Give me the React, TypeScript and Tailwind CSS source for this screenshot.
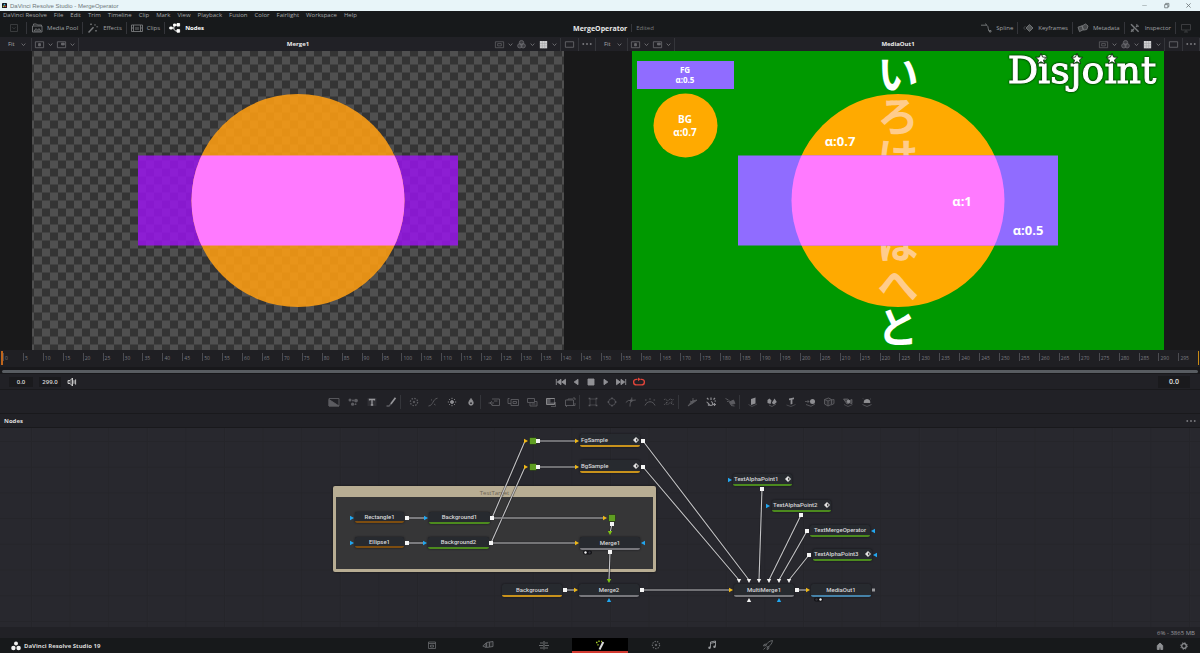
import type { ReactNode } from 'react';
import clsx from 'clsx';

const menus = [
  'DaVinci Resolve', 'File', 'Edit', 'Trim', 'Timeline', 'Clip', 'Mark', 'View',
  'Playback', 'Fusion', 'Color', 'Fairlight', 'Workspace', 'Help',
];

function Glyph({ children, className = 'size-3' }: { children: ReactNode; className?: string }) {
  return (
    <svg viewBox="0 0 12 12" className={clsx('shrink-0', className)} fill="none" stroke="currentColor" strokeWidth="0.9" aria-hidden="true">
      {children}
    </svg>
  );
}

function Chevron() {
  return (
    <Glyph className="size-[11px] text-[#77777b]">
      <path d="M4 5l2 2.2L8 5" />
    </Glyph>
  );
}

function Rule({ className = 'h-3' }: { className?: string }) {
  return <span className={clsx('w-px shrink-0 bg-[#34353a]', className)} />;
}

function IconButton({ label, className, children }: { label: string; className?: string; children: ReactNode }) {
  return (
    <button type="button" aria-label={label} className={clsx('flex shrink-0 items-center justify-center', className)}>
      {children}
    </button>
  );
}

function PanelButton({ label, active, children }: { label: string; active?: boolean; children: ReactNode }) {
  return (
    <button
      type="button"
      className={clsx('flex items-center gap-1 px-1 text-[6px]', active ? 'font-bold text-white' : 'text-[#a0a2a5]')}
    >
      <Glyph className={clsx('size-3', !active && 'text-[#77797c]')}>{children}</Glyph>
      {label}
    </button>
  );
}

function TitleBar() {
  return (
    <div className="flex h-[11px] items-center justify-between bg-[#e8f5f9] text-[6px] text-[#6f777a]">
      <div className="flex items-center gap-[3px] pl-[2px]">
        <svg viewBox="0 0 6 6" className="size-[5px]" aria-hidden="true">
          <rect width="6" height="6" rx="1" fill="#10131c" />
          <circle cx="3" cy="2" r="1.1" fill="#49b4d8" />
          <circle cx="2" cy="4" r="1.1" fill="#b9c23e" />
          <circle cx="4.1" cy="4" r="1.1" fill="#d8443c" />
        </svg>
        <span className="font-['Liberation_Sans',sans-serif]">DaVinci Resolve Studio - MergeOperator</span>
      </div>
      <div className="flex gap-[11px] pr-[6px]">
        <IconButton label="Minimize">
          <Glyph className="size-[11px]"><path d="M3.5 6h5" strokeOpacity=".5" /></Glyph>
        </IconButton>
        <IconButton label="Restore">
          <Glyph className="size-[11px]"><path d="M4 5h3.5v3.5H4zM5 5V3.7h3.6v3.6H7.5" /></Glyph>
        </IconButton>
        <IconButton label="Close">
          <Glyph className="size-[11px]"><path d="M3.7 3.7l4.6 4.6M8.3 3.7L3.7 8.3" /></Glyph>
        </IconButton>
      </div>
    </div>
  );
}

function Toolbar() {
  return (
    <div className="grid h-[18px] grid-cols-3 items-center">
      <div className="flex items-center">
        <IconButton label="Panel layout" className="w-[26px] pl-[2px] text-[#3d3f42]">
          <Glyph><path d="M2.5 2.5h7v7h-7zM4.5 5.3L6 6.8l1.5-1.5" /></Glyph>
        </IconButton>
        <Rule />
        <PanelButton label="Media Pool">
          <path d="M2.5 3.5V2h3l1 1h4v1M1.5 4h9.5v6H1.5zM3 9l2-2.4 1.6 1.6L8 6.6 9.8 9z" />
        </PanelButton>
        <Rule />
        <PanelButton label="Effects">
          <path d="M1.5 10.5l5-5.2" strokeWidth="1.5" />
          <path d="M4 1.5v1.6M3.2 2.3h1.6M8 2v1.8M9.3 4.8h1.8M9 8v1.5M8.2 8.8h1.6" />
        </PanelButton>
        <Rule />
        <PanelButton label="Clips">
          <path d="M.5 3h11v6.5H.5zM2.5 3v6.5M9.5 3v6.5M2.5 6H.5M11.5 6h-2M5 5v3M7 5v3" />
        </PanelButton>
        <Rule />
        <PanelButton label="Nodes" active>
          <path d="M.8 5h2.4v2H.8zM4.6 2h2v2h-2zM8 1.5h2.6v2.6H8zM8 7.6h2.6v2.6H8z" fill="currentColor" />
          <path d="M3.2 6h1.6c0-2 1-3 3.2-3M4.8 6c0 2 1.200 3 3.200 3" />
        </PanelButton>
      </div>
      <div className="flex items-center justify-center gap-1 pl-[27px] text-[6px] text-[#77797c]">
        <span className="text-[7px] font-bold text-[#e8e8e8]">MergeOperator</span>
        <Rule className="h-2" />
        <span>Edited</span>
      </div>
      <div className="flex items-center justify-end pr-2">
        <PanelButton label="Spline">
          <path d="M1 3.2h6M5.5 1.5C6 3 7 3 7.8 4.4s.2 3.4 1 4.6h1.5M9.5 8.5h1.5v1.5H9.5z" />
        </PanelButton>
        <Rule />
        <PanelButton label="Keyframes">
          <path d="M7.5 2.6L11 6 7.5 9.4 4 6z" fill="currentColor" fillOpacity=".6" />
          <path d="M3.5 4L1.6 6l1.9 2" strokeOpacity=".5" />
        </PanelButton>
        <Rule />
        <PanelButton label="Metadata">
          <path d="M1 5.2l4-1.4 1.5 3.8-4 2zM5 4l3.6-2 2.4 2-1.2 3.5-3.4.6z" fill="currentColor" fillOpacity=".5" />
        </PanelButton>
        <Rule />
        <PanelButton label="Inspector">
          <path d="M2 2.2l7.6 7.6" strokeWidth="1.5" />
          <path d="M2 9.8l3-3M7 5l1.2-1.2M8 2.2c-.6 1.5.5 2.4 1.8 1.8M2.2 8c1-.4 2.2.5 1.8 1.8" strokeWidth="1.3" />
        </PanelButton>
        <Rule />
        <IconButton label="Full screen preview" className="ml-1 text-[#3f4144]">
          <Glyph><path d="M1.5 2.5h9V8h-9zM6 8v2M4 10h4" /></Glyph>
        </IconButton>
      </div>
    </div>
  );
}

function ViewerHeader({ title }: { title: string }) {
  return (
    <div className="grid h-[14px] grid-cols-[1fr_auto_1fr] items-center bg-[#212126] text-[6px] text-[#a8a8ab]">
      <div className="flex items-center">
        <button type="button" className="flex items-center gap-[3px] pl-2 pr-[2px]">
          Fit
          <Chevron />
        </button>
        <Rule className="h-[13px]" />
        <IconButton label="View A" className="ml-[2px] text-[#6a6a6e]">
          <Glyph className="size-[11px]">
            <path d="M1.5 3h9v6.500h-9z" />
            <path d="M5 5h2v2.500H5z" fill="currentColor" />
          </Glyph>
          <Chevron />
        </IconButton>
        <IconButton label="Sub view" className="text-[#6a6a6e]">
          <Glyph className="size-[11px]">
            <path d="M1.5 3h9v6.500h-9z" />
            <path d="M6 4.500h3v2H6z" fill="currentColor" />
          </Glyph>
          <Chevron />
        </IconButton>
        <Rule className="h-[13px]" />
      </div>
      <h2 className="font-bold text-[#ececec]">{title}</h2>
      <div className="flex items-center justify-end text-[#6a6a6e]">
        <IconButton label="Region of interest">
          <Glyph className="size-[11px]"><path d="M1.5 3h9v6.500h-9zM4 5h4v2.500H4z" strokeOpacity=".8" /></Glyph>
          <Chevron />
        </IconButton>
        <IconButton label="Color channels">
          <Glyph className="size-[11px]">
            <circle cx="6" cy="4" r="2.4" fill="currentColor" fillOpacity=".4" />
            <circle cx="4.2" cy="7.4" r="2.4" fill="currentColor" fillOpacity=".4" />
            <circle cx="7.8" cy="7.4" r="2.4" fill="currentColor" fillOpacity=".4" />
          </Glyph>
          <Chevron />
        </IconButton>
        <IconButton label="Checker underlay">
          <Glyph className="size-[11px]">
            <path d="M2 2.2h8v8H2z" fill="#cfcfd1" stroke="none" />
            <path d="M4.7 2.2v8M7.300 2.2v8M2 4.900h8M2 7.500h8" stroke="#9a9a9c" strokeWidth="0.5" />
          </Glyph>
          <Chevron />
        </IconButton>
        <Rule className="h-[13px]" />
        <IconButton label="Single viewer" className="px-[3px]">
          <Glyph className="size-[11px]"><path d="M1.5 3h9v6h-9z" /></Glyph>
        </IconButton>
        <Rule className="h-[13px]" />
        <IconButton label="Viewer options" className="px-[2px] text-[#8b8b8f]">
          <Dots />
        </IconButton>
        <Rule className="h-[13px]" />
      </div>
    </div>
  );
}

function Dots() {
  return (
    <Glyph>
      <path d="M1.5 6h1.6M5.2 6h1.6M8.9 6h1.6" strokeWidth="1.5" />
    </Glyph>
  );
}

function MergeView() {
  return (
    <svg viewBox="0 0 532 299" className="block h-auto w-full" role="img" aria-label="Merge1">
      <defs>
        <pattern id="checker" width="16" height="16" x="266" y="149.5" patternUnits="userSpaceOnUse">
          <rect width="16" height="16" fill="#343434" />
          <path d="M0 0h8v8H0zM8 8h8v8H8z" fill="#505050" />
        </pattern>
        <clipPath id="disc">
          <circle cx="266" cy="149.5" r="106.5" />
        </clipPath>
      </defs>
      <rect width="532" height="299" fill="url(#checker)" />
      <rect x="106" y="104.5" width="320" height="90" fill="#9a14ee" fillOpacity=".83" />
      <circle cx="266" cy="149.5" r="106.5" fill="#ff9f12" fillOpacity=".87" />
      <rect x="106" y="104.5" width="320" height="90" fill="#ff7aff" clipPath="url(#disc)" />
    </svg>
  );
}

const star = 'M0-5.6L1.6-1.9 5.5-1.7 2.5.9 3.5 4.800 0 2.700-3.500 4.800-2.500.9-5.500-1.700-1.600-1.900z';

function MediaOutView() {
  return (
    <svg viewBox="0 0 532 299" className="block h-auto w-full" role="img" aria-label="MediaOut1">
      <rect width="532" height="299" fill="#009900" />
      <circle cx="266" cy="149.5" r="106.5" fill="#ffaa00" />
      <g className="font-['Noto_Sans_CJK_JP',sans-serif] text-[42px] font-bold [writing-mode:vertical-rl]" fill="#ffcc8c">
        <text x="266" y="2">
          <tspan fill="#fff">い</tspan>ろは
        </text>
        <text x="266" y="171">
          ほへ<tspan fill="#fff">と</tspan>
        </text>
      </g>
      <rect x="106" y="104.5" width="320" height="90" fill="#906cff" />
      <rect x="106" y="104.5" width="320" height="90" fill="#ff7aff" clipPath="url(#disc)" />
      <rect x="5" y="10" width="97" height="28" fill="#906cff" />
      <circle cx="53.5" cy="74.5" r="32" fill="#ffaa00" />
      <g fontFamily="'Open Sans', sans-serif" fontWeight="700" textAnchor="middle" fill="#fff">
        <text x="53" y="22" fontSize="8">FG</text>
        <text x="53" y="32" fontSize="8">α:0.5</text>
        <text x="53" y="72" fontSize="10">BG</text>
        <text x="53" y="85" fontSize="10">α:0.7</text>
        <text x="208" y="95" fontSize="13">α:0.7</text>
        <text x="330" y="155" fontSize="13">α:1</text>
        <text x="396" y="184" fontSize="13">α:0.5</text>
      </g>
      <text
        x="450"
        y="32"
        fontSize="38"
        textAnchor="middle"
        fill="#fff"
        stroke="#fff"
        className="font-['DejaVu_Serif',serif] drop-shadow-[0_0_1px_#000]"
      >
        Disjoint
      </text>
      <g fill="#fff" stroke="#0a1a0a" strokeWidth="0.8">
        <path d={star} transform="translate(409 8)" />
        <path d={star} transform="translate(445 8)" />
        <path d={star} transform="translate(480 8)" />
      </g>
    </svg>
  );
}

function Ruler() {
  const frames = Array.from({ length: 60 }, (_, i) => i * 5);
  return (
    <div className="flex h-[17px] bg-[#1f1f23] text-[5px] text-[#7b7b80]">
      <span className="mt-px ml-px h-[14px] w-[2px] shrink-0 bg-[#c0661c]" />
      {frames.map((frame) => (
        <span key={frame} className="mt-[3px] h-2 min-w-0 flex-1 border-l border-[#4b4b50] pl-px pt-[3px]">
          {frame}
        </span>
      ))}
      <span className="mt-px mr-px h-[14px] w-px shrink-0 bg-[#c98a14]" />
    </div>
  );
}

function Transport() {
  return (
    <div className="grid h-4 grid-cols-3 items-center border-b border-[#19191c] text-[6px]">
      <div className="flex items-center gap-[6px] pl-[9px]">
        <input aria-label="In point" defaultValue="0.0" className="h-[10px] w-6 bg-[#1a1a1d] text-center font-semibold text-[#d8d8d8]" />
        <input aria-label="Out point" defaultValue="299.0" className="h-[10px] w-[22px] bg-[#1a1a1d] text-center font-semibold text-[#d8d8d8]" />
        <IconButton label="Audio" className="-ml-px text-[#d5d5d5]">
          <Glyph>
            <path d="M2 4.5h2L6.5 2v8L4 7.5H2z" fill="currentColor" fillOpacity=".3" />
            <path d="M8 4.2v3.6M9.6 3.4v5.2" />
          </Glyph>
        </IconButton>
      </div>
      <div className="flex items-center justify-center text-[#919195]">
        <IconButton label="Go to start" className="w-[15px]">
          <Glyph><path d="M1.3 3v6M6 3.300v5.400L2.300 6zM10.500 3.300v5.400L6.800 6z" fill="currentColor" /></Glyph>
        </IconButton>
        <IconButton label="Play reverse" className="w-[15px]">
          <Glyph><path d="M8 3.300v5.400L4.200 6z" fill="currentColor" /></Glyph>
        </IconButton>
        <IconButton label="Stop" className="w-[15px]">
          <Glyph><path d="M3 3h6v6H3z" fill="currentColor" /></Glyph>
        </IconButton>
        <IconButton label="Play" className="w-[15px]">
          <Glyph><path d="M4 3.300v5.400L7.800 6z" fill="currentColor" /></Glyph>
        </IconButton>
        <IconButton label="Go to end" className="w-[15px]">
          <Glyph><path d="M10.7 3v6M6 3.300v5.400L9.700 6zM1.500 3.300v5.400L5.200 6z" fill="currentColor" /></Glyph>
        </IconButton>
        <IconButton label="Loop" className="ml-[3px] w-[15px] text-[#e0453a]">
          <Glyph>
            <path d="M4.500 3.300H3.400a2.600 2.600 0 000 5.600h5.200a2.600 2.600 0 000-5.600H7.500" strokeWidth="1.3" />
            <path d="M5 1.400l2.600 1.900L5 5.200z" fill="currentColor" stroke="none" />
          </Glyph>
        </IconButton>
      </div>
      <div className="flex justify-end pr-[10px]">
        <input aria-label="Current frame" defaultValue="0.0" className="h-3 w-8 bg-[#1a1a1d] text-center text-[7px] font-semibold text-[#e0e0e0]" />
      </div>
    </div>
  );
}

const toolGroups: { label: string; bright?: boolean; icon: ReactNode }[][] = [
  [
    { label: 'Background', icon: <><path d="M1 2.500h10V10H1z" /><path d="M1 3.500L11 10H1z" fill="currentColor" /></> },
    { label: 'Fast Noise', icon: <g fill="currentColor" stroke="none"><circle cx="3" cy="4" r="1.500" /><circle cx="6" cy="4.500" r="1" /><circle cx="9" cy="4.600" r="1.900" /><circle cx="5.600" cy="8.200" r="1.600" /><circle cx="8.600" cy="8.200" r=".9" /></g> },
    { label: 'Text', icon: <><path d="M1.500 2h9v8h-9z" fill="currentColor" fillOpacity=".25" stroke="none" /><path d="M3.500 4.600V3.500h5v1.100M6 3.500v5.500M4.800 9h2.400" strokeWidth="1.300" stroke="#96969a" /></> },
    { label: 'Paint', icon: <><path d="M10.500 1.800L5.800 8" strokeWidth="1.700" stroke="#96969a" /><path d="M5.800 8L4 10H1.500" strokeWidth="1.300" /></> },
  ],
  [
    { label: 'Color Corrector', icon: <><circle cx="6" cy="6" r="3.600" strokeWidth="1.300" strokeDasharray="1.500 1.300" /><circle cx="6" cy="6" r=".8" fill="currentColor" /></> },
    { label: 'Color Curves', icon: <path d="M1.500 10C6.500 9.500 5.500 3 10.500 2.200M4 3.500l1 .8M7 8l1.500 1" /> },
    { label: 'Brightness Contrast', bright: true, icon: <><circle cx="6" cy="6" r="1.500" fill="currentColor" /><path d="M6 1.800v1.200M6 9v1.200M1.800 6H3M9 6h1.200M3 3l.9.900M8.100 8.100l.9.900M9 3l-.9.900M3 9l.9-.9" /></> },
    { label: 'Blur', bright: true, icon: <><path d="M6 2.500c1.200 1.800 2.200 3 2.200 4.500a2.200 2.200 0 01-4.400 0C3.800 5.500 4.800 4.300 6 2.500z" fill="currentColor" /><circle cx="6" cy="7.200" r=".9" fill="#212126" stroke="none" /></> },
  ],
  [
    { label: 'Merge', icon: <path d="M4 3h7.500v6.500H4V8M.5 7H6M4 5.200L2 7l2 1.800M6 5h3.500" /> },
    { label: 'Channel Booleans', icon: <path d="M4 3.500h7.500v6H4zM1 2.500v5h3M2.500 2.500H1M6 5.500h3.500v2H6z" /> },
    { label: 'Matte Control', icon: <path d="M1.500 2.500h7v4h-7zM4 6.500V10h7V5.500H8.500M5.500 8h4" /> },
    { label: 'Resize', bright: true, icon: <><path d="M1.500 2.500h8v6h-8z" fill="currentColor" fillOpacity=".5" /><path d="M5.500 3h4v3.500h-4z" fill="#212126" stroke="none" /><path d="M6 10.500h4.500V6" strokeOpacity=".5" /></> },
    { label: 'Transform', icon: <path d="M1.500 4h8v5.500h-8zM9 2h2v2M1 9.500h1.500V11M4 4V3h5M8 9.500h3V7" /> },
  ],
  [
    { label: 'Rectangle', icon: <><path d="M3 3h6v6H3z" strokeWidth=".6" /><path d="M2.500 2.500h.01M9.500 2.500h.01M2.500 9.500h.01M9.500 9.500h.01" strokeWidth="1.700" strokeLinecap="square" /></> },
    { label: 'Ellipse', icon: <><circle cx="6" cy="6" r="3.400" strokeWidth=".7" /><path d="M5.300 2.300h1.400M5.300 9.700h1.400M2.300 5.300v1.400M9.700 5.300v1.400" strokeWidth="1.400" /></> },
    { label: 'Polygon', icon: <path d="M.8 6.500l2.500-2h3l4.500-.5M6.800 1.500C7.500 5 4.500 6 5 10.500M5.500 3.800h1.600v1.600H5.500z" /> },
    { label: 'B-Spline', icon: <path d="M1 9.500C3 4.500 9 4.500 11 9.500M1 4h1.600M5.200 3h1.600M9.500 4h1.600" /> },
    { label: 'Bitmap', icon: <path d="M1 4c2-3 3 3 5 0s3 2 5-1M1 9c2-3 3 1 5-1.500S9 10 11 8M3 6.500h2M8 6h2" strokeDasharray="1.400 .6" /> },
  ],
  [
    { label: 'Particle Emitter', icon: <><path d="M2 10l4-5 5-1-4 3z" fill="currentColor" /><path d="M4 5l2 1M7 2v3" /></> },
    { label: 'Particle Merge', bright: true, icon: <path d="M2 2l1.500 1.500M6 1.500V4M10 2L8.500 3.500M1.500 6c2 0 2 3.500 4.500 3.500S8 6 6 5.500M8 8.500h3M9.500 7v3M3 9.500l1-1M9.500 5H11" strokeWidth="1.200" /> },
    { label: 'Particle Render', icon: <><path d="M1.500 2.500l3 1.500M3 5.500L6 5M5.500 6l4-2L11 7.500l-4.500 1z" fill="currentColor" /><path d="M7 9.500l3.500.5" /></> },
  ],
  [
    { label: 'Image Plane', bright: true, icon: <><path d="M4 3l4.500-1.500v6L4 9z" fill="currentColor" stroke="none" /><path d="M1.500 8.500l3.500 2L10 8" strokeOpacity=".4" /></> },
    { label: 'Shape 3D', bright: true, icon: <><path d="M1.500 4l2-1.500 2 2L4.500 8l-3-1z" fill="currentColor" stroke="none" /><path d="M8.500 2.500L10.800 6 8 8.500 5.800 7z" fill="currentColor" stroke="none" /><path d="M3 9l3 1.500L10 8" strokeOpacity=".5" /></> },
    { label: 'Text 3D', bright: true, icon: <><path d="M4 2.500l5-1v1.800l-1.600.3V8l-1.800.5V4L4 4.300z" fill="currentColor" stroke="none" /><path d="M1.500 9L6 10.500l4.500-2" strokeOpacity=".4" /></> },
    { label: 'Merge 3D', bright: true, icon: <><circle cx="8.500" cy="5.500" r="2.500" fill="currentColor" stroke="none" /><path d="M1 5.500h4M3.500 4L5 5.500 3.500 7M2 8.500l5 1.800L11 8" strokeOpacity=".5" /></> },
    { label: 'Cube 3D', icon: <path d="M1.500 3.500L5.500 2l3 1.500v5L5 10 1.500 8zM5 5v5M1.500 3.500L5 5l3.500-1.500M8.500 4l2.500-.5v4L8.500 9" fill="currentColor" fillOpacity=".2" /> },
    { label: 'Camera 3D', bright: true, icon: <><path d="M1.500 3h4l2 1.500 2.500-1v4L7.500 7 5 8z" fill="currentColor" fillOpacity=".3" strokeOpacity=".5" /><circle cx="6.500" cy="5.500" r="1.300" fill="currentColor" /><path d="M2 8.500l4 2 4.500-2" strokeOpacity=".4" /></> },
    { label: 'Light 3D', bright: true, icon: <><path d="M3 6.500a3 3 0 016 0z" fill="currentColor" /><path d="M1.500 8.500L6 10.500l4.500-2M2 2.500l.8.800M10 2.500l-.8.800" strokeOpacity=".5" /></> },
  ],
];

function ToolStrip() {
  return (
    <div className="flex h-6 items-center justify-center border-b border-[#19191c]">
      {toolGroups.map((group, index) => (
        <div key={group[0].label} className="flex items-center">
          {index > 0 && <Rule className="mr-[3px] h-[14px]" />}
          {group.map((tool) => (
            <IconButton key={tool.label} label={tool.label} className={clsx('w-[19px]', tool.bright ? 'text-[#8e8e92]' : 'text-[#5c5c61]')}>
              <Glyph>{tool.icon}</Glyph>
            </IconButton>
          ))}
        </div>
      ))}
    </div>
  );
}

type FlowNode = { name: string; x: number; y: number; w: number; h: number; bar: string; keyed?: boolean };

const flowNodes: FlowNode[] = [
  { name: 'FgSample', x: 580, y: 6, w: 60, h: 13, bar: 'border-[#c8921c]', keyed: true },
  { name: 'BgSample', x: 580, y: 32, w: 60, h: 13, bar: 'border-[#c8921c]', keyed: true },
  { name: 'Rectangle1', x: 355, y: 84, w: 49, h: 11, bar: 'border-[#7d4d10]' },
  { name: 'Background1', x: 429, y: 84, w: 61, h: 12, bar: 'border-[#4c8a1e]' },
  { name: 'Ellipse1', x: 355, y: 109, w: 49, h: 11, bar: 'border-[#7d4d10]' },
  { name: 'Background2', x: 428, y: 109, w: 61, h: 12, bar: 'border-[#4c8a1e]' },
  { name: 'Merge1', x: 580, y: 109, w: 60, h: 13, bar: 'border-[#77777c]' },
  { name: 'Background', x: 502, y: 156, w: 60, h: 13, bar: 'border-[#c8921c]' },
  { name: 'Merge2', x: 579, y: 156, w: 60, h: 13, bar: 'border-[#77777c]' },
  { name: 'TextAlphaPoint1', x: 733, y: 46, w: 59, h: 12, bar: 'border-[#4c8a1e]', keyed: true },
  { name: 'TextAlphaPoint2', x: 772, y: 72, w: 59, h: 12, bar: 'border-[#4c8a1e]', keyed: true },
  { name: 'TextMergeOperator', x: 810, y: 97, w: 60, h: 12, bar: 'border-[#4c8a1e]' },
  { name: 'TextAlphaPoint3', x: 813, y: 121, w: 59, h: 12, bar: 'border-[#4c8a1e]', keyed: true },
  { name: 'MultiMerge1', x: 734, y: 156, w: 60, h: 13, bar: 'border-[#77777c]' },
  { name: 'MediaOut1', x: 811, y: 156, w: 60, h: 13, bar: 'border-[#4682a8]' },
];

const wires = [
  [492, 90, 525, 13], [491, 115, 525, 39], [538, 13, 575, 13], [538, 39, 575, 39],
  [643, 13, 749, 152], [643, 39, 739, 152], [407, 90, 425, 90], [407, 115, 424, 115],
  [492, 90, 603, 90], [491, 115, 575, 115], [612, 96, 610, 105], [610, 124, 609, 152],
  [565, 162, 575, 162], [642, 162, 730, 162], [762, 61, 759, 152], [801, 87, 769, 152],
  [807, 103, 779, 152], [809, 127, 789, 152], [797, 162, 807, 162],
];

const outputs = [
  [538, 13], [538, 39], [643, 13], [643, 39], [407, 90], [407, 115], [492, 90], [491, 115],
  [612, 96], [610, 124], [565, 162], [642, 162], [762, 61], [801, 87], [807, 103], [809, 127], [797, 162],
];

const yellow = '#efb817';
const blue = '#22a7f0';
const green = '#7fc413';
const white = '#f2f2f2';

// x, y, rotation, colour
const inputs: [number, number, number, string][] = [
  [526, 13, 0, yellow], [526, 39, 0, yellow], [577, 13, 0, yellow], [577, 39, 0, yellow],
  [605, 90, 0, yellow], [577, 115, 0, yellow], [576, 162, 0, yellow], [731, 162, 0, yellow],
  [808, 162, 0, yellow], [352, 90, 0, blue], [352, 115, 0, blue], [426, 90, 0, blue],
  [425, 115, 0, blue], [730, 52, 0, blue], [768, 78, 0, blue], [643, 115, 180, blue],
  [873, 103, 180, blue], [875, 127, 180, blue], [609, 172, 270, blue], [779, 172, 270, blue],
  [749, 172, 270, white], [610, 105, 90, green], [609, 153, 90, green],
  [739, 153, 90, white], [749, 153, 90, white], [759, 153, 90, white],
  [769, 153, 90, white], [779, 153, 90, white], [789, 153, 90, white],
];

function NodeGraph() {
  return (
    <main className="relative min-h-[199px] flex-1 overflow-hidden bg-[#28282e]">
      <svg className="absolute inset-0 size-full" aria-hidden="true">
        <defs>
          <pattern id="grid" width="38.6" height="25.7" x="31" y="13" patternUnits="userSpaceOnUse">
            <path d="M.5 0v26M0 .5h39" stroke="#25252a" />
          </pattern>
        </defs>
        <rect width="100%" height="100%" fill="url(#grid)" />
      </svg>
      <section className="absolute top-[58px] left-[333px] h-[86px] w-[323px] rounded-xs border-[3px] border-[#b8ad93] bg-[#363637] shadow-[0_0_2px_#111]">
        <h3 className="flex h-2 items-center justify-center bg-[#b8ad93] text-[6px] text-[#6c6454]">TestTarget</h3>
      </section>
      {flowNodes.map((node) => (
        <div
          key={node.name}
          className={clsx(
            "absolute flex items-center rounded-xs border-b-2 bg-[#272a2f] px-px font-['Roboto',sans-serif] text-[6px] font-medium whitespace-nowrap text-[#d8d8da] shadow-[0_0_2px_#101014]",
            node.keyed ? 'justify-between' : 'justify-center',
            node.bar,
          )}
          style={{ left: node.x, top: node.y, width: node.w, height: node.h }}
        >
          {node.name}
          {node.keyed && (
            <svg viewBox="0 0 6 6" className="size-[6px] shrink-0" aria-hidden="true">
              <path d="M3 0l3 3-3 3-3-3z" fill="#e2e2e2" />
              <path d="M3.2 1.6v2.800L4.800 3z" fill="#222" />
            </svg>
          )}
        </div>
      ))}
      <svg className="absolute inset-0 size-full" aria-hidden="true">
        {wires.map(([x1, y1, x2, y2]) => (
          <g key={`${x1}-${y1}-${x2}-${y2}`}>
            <line x1={x1} y1={y1} x2={x2} y2={y2} stroke="#15151a" strokeWidth="2.4" strokeOpacity=".5" />
            <line x1={x1} y1={y1} x2={x2} y2={y2} stroke="#c4c4c6" strokeWidth="1.1" />
          </g>
        ))}
        {[[533, 13], [533, 39], [612, 90]].map(([x, y]) => (
          <rect key={`${x}-${y}`} x={x - 3.5} y={y - 3.5} width="7" height="7" rx="1" fill="#5f9e22" stroke="#1c2416" strokeWidth=".6" />
        ))}
        {outputs.map(([x, y]) => (
          <rect key={`${x}-${y}`} x={x - 2} y={y - 2} width="4" height="4" fill="#f4f4f4" />
        ))}
        {inputs.map(([x, y, turn, color]) => (
          <path key={`${x}-${y}`} d="M-2-2.2L2 0-2 2.2z" fill={color} transform={`translate(${x} ${y}) rotate(${turn})`} />
        ))}
        <rect x="872" y="160.5" width="3" height="3" fill="#98989b" />
        <rect x="583" y="122.5" width="9" height="4" rx="2" fill="#111114" />
        <circle cx="585.5" cy="124.5" r="1.2" fill="#f2f2f2" />
        <circle cx="589.5" cy="124.5" r="1.2" fill="#33333a" />
        <rect x="814" y="169.5" width="9" height="4" rx="2" fill="#111114" />
        <circle cx="816.5" cy="171.5" r="1.2" fill="#33333a" />
        <circle cx="820.5" cy="171.5" r="1.2" fill="#f2f2f2" />
      </svg>
    </main>
  );
}

const pages: { label: string; icon: ReactNode }[] = [
  { label: 'Media', icon: <path d="M2.500 3h7v6.500h-7zM2.500 4.500h7M4.500 6.200h3v1.800h-3z" strokeWidth=".8" /> },
  { label: 'Cut', icon: <path d="M.8 7L4 4v4.500zM4.500 3.500l6.500-1v5l-6.500 1zM7.500 3v5" fill="currentColor" fillOpacity=".2" /> },
  { label: 'Edit', icon: <path d="M2 4h3M7 4h3M1 6.500h4M7 6.500h4M2 9h3M7 9h3M6 2v8.500" strokeWidth="1.2" /> },
  {
    label: 'Fusion',
    icon: (
      <>
        <path d="M5.500 10.500L9.300 3" strokeWidth="2" stroke="#dadada" />
        <path d="M2 3.500h1.500M5 1.500V3M3.500 5.500l1 .8M7 2.500h1" stroke="#a8cf2a" strokeWidth="1.3" />
      </>
    ),
  },
  { label: 'Color', icon: <><circle cx="6" cy="6" r="3.600" strokeWidth="1.2" strokeDasharray="1.400 1.100" /><circle cx="6" cy="6" r=".8" fill="currentColor" /></> },
  { label: 'Fairlight', icon: <><path d="M4.500 8.500V3l5-1v5.500M4.500 4.300l5-1" stroke="#9a9c9f" /><circle cx="3.500" cy="8.800" r="1.200" fill="#9a9c9f" stroke="none" /><circle cx="8.500" cy="7.800" r="1.200" fill="#9a9c9f" stroke="none" /></> },
  { label: 'Deliver', icon: <path d="M10.500 1.500C7 2 5 4 4 6.500L5.500 8C8 7 10 5 10.500 1.500zM4.500 5L2 5.500 1.500 7 4 6.500M7 7.500L6.500 10 5 10.500 5.500 8M3.500 8.500l-2 2" /> },
];

function PageBar() {
  return (
    <footer className="grid h-[15px] grid-cols-[1fr_auto_1fr] items-center bg-[#17191b]">
      <div className="flex items-center gap-[2px] pl-[10px] text-[6px] font-bold text-[#d8d8d8]">
        <Glyph>
          <g fill="#f2f2f2" stroke="none">
            <circle cx="6" cy="3.6" r="2" />
            <circle cx="3.4" cy="8" r="2.2" />
            <circle cx="8.6" cy="8" r="2.2" />
          </g>
        </Glyph>
        DaVinci Resolve Studio 19
      </div>
      <nav className="flex h-[15px]">
        {pages.map((page) => (
          <IconButton
            key={page.label}
            label={page.label}
            className={clsx('w-14 border-b-2', page.label === 'Fusion' ? 'border-[#d23a30] bg-black' : 'border-transparent text-[#686a6d]')}
          >
            <Glyph>{page.icon}</Glyph>
          </IconButton>
        ))}
      </nav>
      <div className="flex justify-end gap-3 pr-[10px] text-[#8f9194]">
        <IconButton label="Project manager">
          <Glyph><path d="M6 3L3.3 5.5v4h1.900V7.2h1.600v2.300h1.900v-4z" fill="currentColor" /></Glyph>
        </IconButton>
        <IconButton label="Project settings">
          <Glyph>
            <circle cx="6" cy="6" r="2.3" strokeWidth="1.2" />
            <circle cx="6" cy="6" r="3.3" strokeDasharray="1.3 1.3" />
          </Glyph>
        </IconButton>
      </div>
    </footer>
  );
}

export default function App() {
  return (
    <div className="flex min-h-screen flex-col bg-[#212126] font-['Open_Sans',sans-serif] leading-none">
      <header className="bg-[#17191b]">
        <TitleBar />
        <nav className="flex h-2 items-center gap-[7px] pl-[3px] text-[6px] text-[#a8aaac]">
          {menus.map((menu) => (
            <button key={menu} type="button">{menu}</button>
          ))}
        </nav>
        <Toolbar />
      </header>
      <div className="grid grid-cols-[149fr_151fr] bg-[#19191a]">
        <section>
          <ViewerHeader title="Merge1" />
          <div className="px-8">
            <MergeView />
          </div>
        </section>
        <section>
          <ViewerHeader title="MediaOut1" />
          <div className="px-9">
            <MediaOutView />
          </div>
        </section>
      </div>
      <Ruler />
      <div className="bg-[#18181b] px-[2px] pt-[3px] pb-px">
        <div className="h-[3px] rounded-full bg-[#585c61]" />
      </div>
      <Transport />
      <ToolStrip />
      <div className="flex h-[14px] items-center justify-between border-b border-[#19191c] pl-1 pr-[3px] text-[6px] font-bold text-[#dcdcdc]">
        <h2>Nodes</h2>
        <IconButton label="Node editor options" className="text-[#8b8b8f]">
          <Dots />
        </IconButton>
      </div>
      <NodeGraph />
      <div className="flex h-[11px] items-center justify-end pr-[5px] text-[6px] text-[#9b9b9f]">6% - 3865 MB</div>
      <PageBar />
    </div>
  );
}
